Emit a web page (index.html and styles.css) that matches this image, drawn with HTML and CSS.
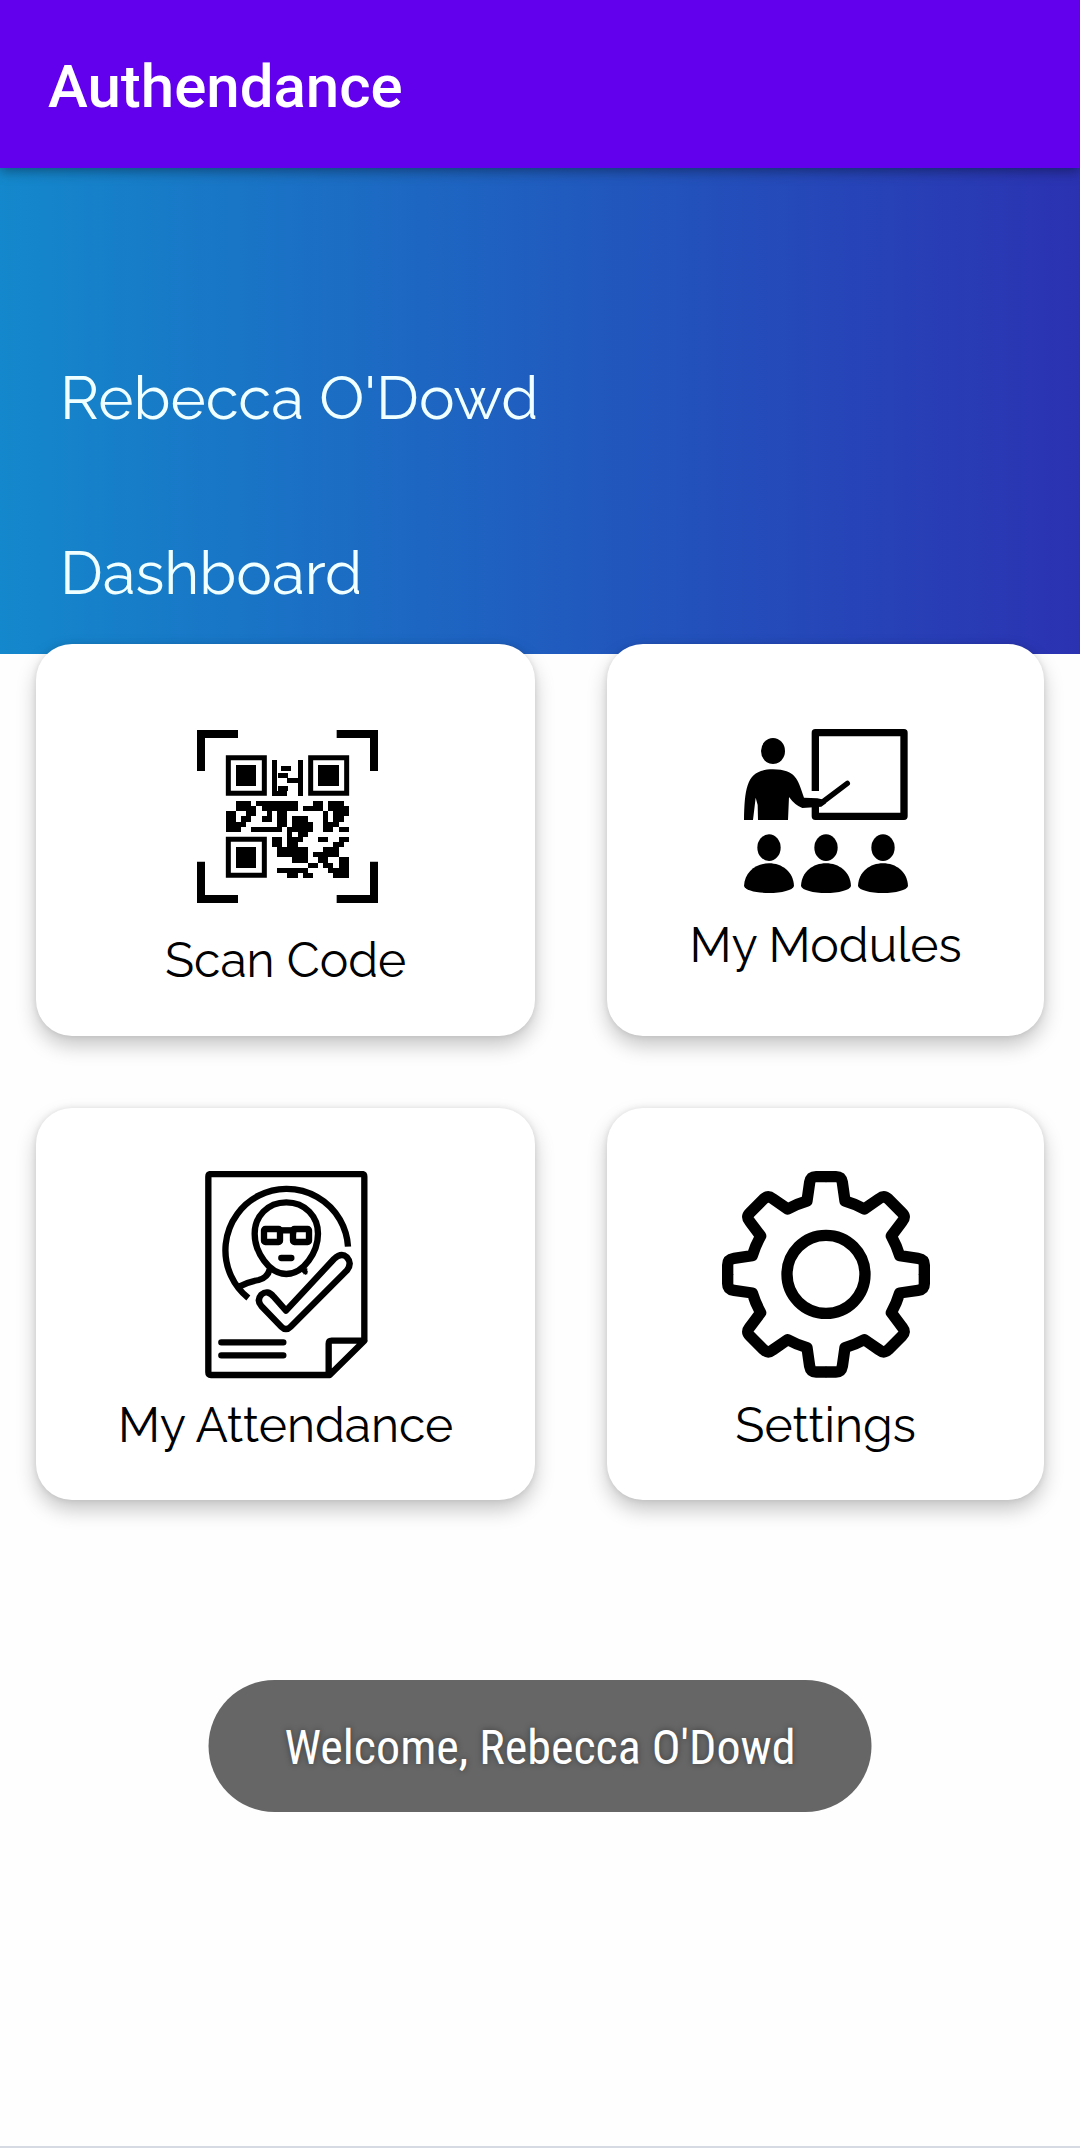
FILE: index.html
```html
<!DOCTYPE html>
<html lang="en">
<head>
  <meta charset="utf-8">
  <meta name="viewport" content="width=device-width, initial-scale=1">
  <title>Authendance</title>
  <link rel="stylesheet" href="styles.css">
</head>
<body class="page">
  <header class="app-bar">
    <h1 class="app-title">Authendance</h1>
  </header>

  <section class="hero">
    <p class="hero-text">Rebecca O'Dowd</p>
    <h2 class="hero-text">Dashboard</h2>
  </section>

  <main class="cards">
    <a class="card" href="#scan">
      <svg class="icon icon-scan" viewBox="3 -21 630 630" aria-hidden="true">
        <path fill="none" stroke="#000" stroke-width="24" d="M63 168V57H174M470 57H582V168M582 440V552H470M174 552H63V440"/>
        <path fill="none" stroke="#000" stroke-width="15" d="M145 128H253V235H145ZM392 128H500V235H392ZM145 373H253V481H145Z"/>
        <path shape-rendering="crispEdges" d="M168 150h61v63h-61zM414 150h62v63h-62zM168 396h61v63h-61z
          M276 135h15v93h30v15h-45zM353 135h16v108h-16zM303 153h30v15h-30zM294 174h30v15h29v15h-32v-15h-27zM294 213h30v15h-30z
          M168 258h46v16h-46zM229 258h124v16h-124zM399 258h30v16h-30zM444 258h47v16h-47z
          M168 274h61v15h-61zM245 274h108v15h-108zM369 274h60v15h-60zM444 274h63v15h-63z
          M137 289h31v15h-31zM198 289h31v15h-31zM260 289h16v15h-16zM291 289h30v15h-30zM429 289h15v15h-15zM460 289h47v15h-47z
          M137 304h31v16h-31zM183 304h31v16h-31zM245 304h31v16h-31zM291 304h30v16h-30zM337 304h47v16h-47zM429 304h15v16h-15zM460 304h31v16h-31z
          M137 320h61v15h-61zM291 320h30v15h-30zM337 320h62v15h-62zM429 320h47v15h-47z
          M137 335h46v15h-46zM214 335h93v15h-93zM321 335h78v15h-78zM429 335h31v15h-31zM476 335h31v15h-31z
          M321 350h16v16h-16zM353 350h31v16h-31z
          M276 366h31v15h-31zM321 366h48v15h-48zM414 366h30v15h-30zM476 366h31v15h-31z
          M276 381h31v15h-31zM321 381h32v15h-32zM460 381h31v15h-31z
          M291 396h93v16h-93zM429 396h47v16h-47z
          M291 412h93v15h-93zM399 412h77v15h-77z
          M337 427h47v16h-47zM414 427h30v16h-30zM476 427h31v16h-31z
          M291 443h0v15h30v15h-30zM384 443h30v15h-30zM429 443h31v15h-31zM476 443h31v15h-31z
          M291 458h93v15h-93zM444 458h63v15h-63z
          M321 473h32v16h-32zM369 473h30v16h-30zM460 473h47v16h-47z"/>
      </svg>
      <span class="card-label">Scan Code</span>
    </a>

    <a class="card" href="#modules">
      <svg class="icon icon-modules" viewBox="48 39 540 540" aria-hidden="true">
        <path fill="none" stroke="#000" stroke-width="22" stroke-linejoin="round" d="M286 243V68H552V319H286V285"/>
        <path fill="none" stroke="#000" stroke-width="16" stroke-linecap="round" d="M308 276L382 220"/>
        <ellipse cx="159" cy="123" rx="36" ry="39"/>
        <path d="M72 330C74 225 82 178 159 178C228 180 232 205 252 263L292 265L312 269L318 280L304 290L247 294Q225 286 207 261L204 330H114L113 285L107 263L99 330Z"/>
        <ellipse cx="147" cy="413" rx="35" ry="40"/>
        <ellipse cx="318" cy="413" rx="35" ry="40"/>
        <ellipse cx="489" cy="413" rx="35" ry="40"/>
        <path id="bust" d="M72 528C74 485 108 460 147 460S220 485 222 528C219 541 185 549 147 549S75 541 72 528Z"/>
        <use href="#bust" x="171"/>
        <use href="#bust" x="342"/>
      </svg>
      <span class="card-label">My Modules</span>
    </a>

    <a class="card" href="#attendance">
      <svg class="icon icon-large" viewBox="-31 48 636 636" aria-hidden="true">
        <g fill="none" stroke="#000" stroke-width="19" stroke-linejoin="round">
          <path d="M522 557V65Q522 57 514 57H62Q54 57 54 65V652Q54 660 62 660H418L522 557H424Q415 557 415 566V660"/>
          <path d="M174 429A184 184 0 1 1 473 275"/>
          <path d="M288 142C345 142 383 185 383 236C383 290 340 357 288 357C236 357 193 290 193 236C193 185 231 142 288 142Z"/>
          <rect x="221" y="222" width="48" height="39" rx="4"/>
          <rect x="308" y="222" width="48" height="39" rx="4"/>
          <path d="M260 226H318"/>
          <path d="M238 343Q232 368 205 375Q175 381 148 394"/>
          <path stroke-linecap="round" d="M273 309H303M93 562H279M93 601H279"/>
          <path stroke-width="12" d="M333 343L350 355M345 340V358"/>
          <path d="M287 467L431 312Q453 291 470 307Q486 325 470 346L301 515Q287 529 273 515L213 453Q198 436 213 419Q232 403 250 425Z"/>
        </g>
      </svg>
      <span class="card-label">My Attendance</span>
    </a>

    <a class="card" href="#settings">
      <svg class="icon icon-large" viewBox="30 48 636 636" aria-hidden="true">
        <g fill="none" stroke="#000" stroke-width="34" stroke-linejoin="round">
          <path id="gear-quarter" d="M347 65H378Q394 65 397 82L405 138Q436 147 463 162L508 131Q522 120 535 132L576 173Q588 185 577 199L544 243Q560 272 569 302L624 310Q643 313 643 330V359"/>
          <use href="#gear-quarter" transform="translate(696 0) scale(-1 1)"/>
          <use href="#gear-quarter" transform="translate(0 716) scale(1 -1)"/>
          <use href="#gear-quarter" transform="translate(696 716) scale(-1 -1)"/>
          <circle cx="348" cy="358" r="117"/>
        </g>
      </svg>
      <span class="card-label">Settings</span>
    </a>
  </main>

  <div class="toast" role="status">Welcome, Rebecca O'Dowd</div>
</body>
</html>
```

FILE: styles.css
```css
*,
*::before,
*::after {
  box-sizing: border-box;
}

.page {
  display: flex;
  flex-direction: column;
  min-height: 100vh;
  margin: 0;
  background: #fefefe;
  border-bottom: 2px solid #d6dbe3;
  font-family: Raleway, Lato, "Open Sans", sans-serif;
}

.app-bar {
  position: relative;
  display: flex;
  align-items: center;
  height: 168px;
  padding: 6px 48px 0;
  background: #6200ee;
  box-shadow: 0 3px 12px rgba(0, 0, 0, 0.4);
}

.app-title {
  margin: 0;
  color: #fff;
  font: 500 60px/72px Roboto, sans-serif;
}

.hero {
  display: flex;
  flex-direction: column;
  gap: 103px;
  padding: 194px 60px 45px;
  background: linear-gradient(90deg, #1488cc, #2b32b2);
}

.hero-text {
  margin: 0;
  color: #f0ffff;
  font-size: 60px;
  font-weight: 400;
  line-height: 72px;
}

.cards {
  display: grid;
  grid-template-columns: 8fr 7fr;
  gap: 72px;
  margin-top: -10px;
  padding: 0 36px;
}

.card {
  display: flex;
  flex-direction: column;
  align-items: center;
  justify-content: center;
  gap: 14px;
  min-height: 392px;
  padding-top: 16px;
  border-radius: 36px;
  background: #fff;
  box-shadow: 0 10px 20px rgba(0, 0, 0, 0.22), 0 0 6px rgba(0, 0, 0, 0.1);
  color: #000;
  text-decoration: none;
}

.card-label {
  font-size: 48px;
  line-height: 56px;
}

.icon {
  display: block;
}

.icon-scan {
  width: 210px;
  height: 210px;
}

.icon-modules {
  width: 180px;
  height: 180px;
}

.icon-large {
  width: 212px;
  height: 212px;
}

.toast {
  position: fixed;
  bottom: 336px;
  left: 50%;
  transform: translateX(-50%);
  padding: 40px 76px 36px;
  border-radius: 66px;
  background: #666;
  color: #fff;
  font: 400 48px/56px "Roboto Condensed", Roboto, sans-serif;
  text-shadow: 0 0 6px rgba(0, 0, 0, 0.4);
  white-space: nowrap;
}
```
